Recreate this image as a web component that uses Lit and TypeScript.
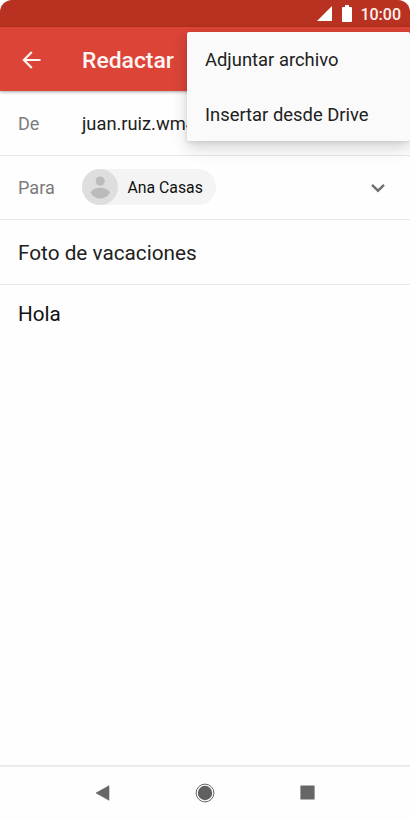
import { LitElement, html, css } from "lit";
import { customElement } from "lit/decorators.js";

@customElement("app-root")
class AppRoot extends LitElement {
  static styles = css`
    :host {
      display: block;
      font-family: Roboto, "Noto Sans", sans-serif;
      color: #212121;
      background: #fff;
    }
    * { box-sizing: border-box; }
    svg { display: block; flex: none; }
    .screen {
      position: relative;
      width: 100%;
      height: 820px;
      display: flex;
      flex-direction: column;
      overflow: hidden;
      border-radius: 12px 12px 0 0;
      background: #fefefe;
    }
    .status {
      height: 27px;
      flex: none;
      display: flex;
      align-items: center;
      justify-content: flex-end;
      background: #b93221;
      color: #fdf1ef;
      padding: 1px 9px 0 0;
      font-size: 16px;
      font-weight: 500;
    }
    .signal { margin: 0 10px 1px 0; }
    .battery { margin: 0 8px 2px 0; }
    .bar {
      height: 64px;
      flex: none;
      display: flex;
      align-items: center;
      padding: 2px 0 0 22px;
      background: #db4437;
      color: #fff5f4;
      box-shadow: 0 1px 3px rgba(0, 0, 0, 0.35);
      z-index: 1;
    }
    .back { margin-bottom: 1px; }
    .title {
      margin-left: 40px;
      font-size: 22.9px;
      font-weight: 500;
    }
    .row {
      flex: none;
      display: flex;
      align-items: center;
      padding: 0 18px;
      border-bottom: 1px solid #e8e8e8;
      font-size: 18px;
      white-space: nowrap;
    }
    .from { height: 65px; padding-top: 1px; }
    .sender { font-size: 18.3px; }
    .to { height: 64px; padding-bottom: 2px; }
    .subject { height: 65px; padding-top: 1px; font-size: 20.75px; }
    .label { width: 64px; color: #7b7b7b; font-size: 18.1px; }
    .to .label { padding-top: 1px; }
    .chip {
      display: flex;
      align-items: center;
      height: 36px;
      width: 134px;
      border-radius: 18px;
      background: #f4f4f4;
      font-size: 15.8px;
      color: #111;
    }
    .chip span { margin-left: 9.5px; padding-top: 1px; }
    .chevron { margin: 2px 6px 0 auto; }
    .body {
      flex: 1;
      padding: 17px 18px;
      font-size: 20.7px;
      line-height: 24px;
      color: #111;
    }
    .nav {
      height: 55px;
      flex: none;
      display: flex;
      justify-content: center;
      align-items: center;
      padding-bottom: 2px;
      border-top: 2px solid #ebebeb;
      gap: 85px;
    }
    .menu {
      position: absolute;
      z-index: 2;
      top: 32px;
      right: 0;
      width: 223px;
      height: 109px;
      padding: 0 0 0 18px;
      display: flex;
      flex-direction: column;
      border-radius: 2px;
      background: #fafafa;
      box-shadow: 0 7px 16px rgba(0, 0, 0, 0.17), 0 1px 4px rgba(0, 0, 0, 0.1);
      font-size: 18.4px;
    }
    .item { height: 55px; flex: none; display: flex; align-items: center; }
  `;

  render() {
    return html`
      <div class="screen">
        <div class="status">
          <svg class="signal" width="15" height="15" viewBox="0 0 15 15"><path d="M0 15L15 0V15Z" fill="#fff" /></svg>
          <svg class="battery" width="10" height="17" viewBox="0 0 10 17"><path d="M3 0H7V2H9Q10 2 10 3V16Q10 17 9 17H1Q0 17 0 16V3Q0 2 1 2H3Z" fill="#fff" /></svg>
          <span>10:00</span>
        </div>
        <header class="bar">
          <svg class="back" width="20" height="18" viewBox="0 0 20 18" fill="none" stroke="#fff5f4" stroke-width="2.2"><path d="M18.500 9H2.500M9.800 1L1.900 9L9.800 17" /></svg>
          <span class="title">Redactar</span>
        </header>
        <div class="row from"><span class="label">De</span><span class="sender">juan.ruiz.wm4</span></div>
        <div class="row to">
          <span class="label">Para</span>
          <div class="chip">
            <svg width="36" height="36" viewBox="0 0 36 36">
              <circle cx="18" cy="18" r="18" fill="#dedede" />
              <circle cx="18.2" cy="12" r="4.6" fill="#bbb" />
              <path d="M8.500 23.200C10 20.500 14 18.700 18.200 18.700S26.400 20.500 27.900 23.200C26.400 27 22.500 29.500 18.200 29.500S10 27 8.500 23.200Z" fill="#bbb" />
            </svg>
            <span>Ana Casas</span>
          </div>
          <svg class="chevron" width="16" height="10" viewBox="0 0 16 10" fill="none" stroke="#707070" stroke-width="2.4"><path d="M2 1.800L8 7.700L14 1.800" /></svg>
        </div>
        <div class="row subject">Foto de vacaciones</div>
        <div class="body">Hola</div>
        <nav class="nav">
          <svg width="15" height="16" viewBox="0 0 15 16"><path d="M1 8L14 .7V15.300Z" fill="#666" stroke="#666" stroke-width=".6" stroke-linejoin="round" /></svg>
          <svg width="20" height="20" viewBox="0 0 20 20"><circle cx="10" cy="10" r="8.900" fill="none" stroke="#666" stroke-width="1" /><circle cx="10" cy="10" r="7.200" fill="#606060" /></svg>
          <svg width="15" height="15" viewBox="0 0 15 15"><rect x=".4" y=".4" width="14.200" height="14.200" rx=".5" fill="#666" /></svg>
        </nav>
        <div class="menu">
          <div class="item">Adjuntar archivo</div>
          <div class="item">Insertar desde Drive</div>
        </div>
      </div>
    `;
  }
}
